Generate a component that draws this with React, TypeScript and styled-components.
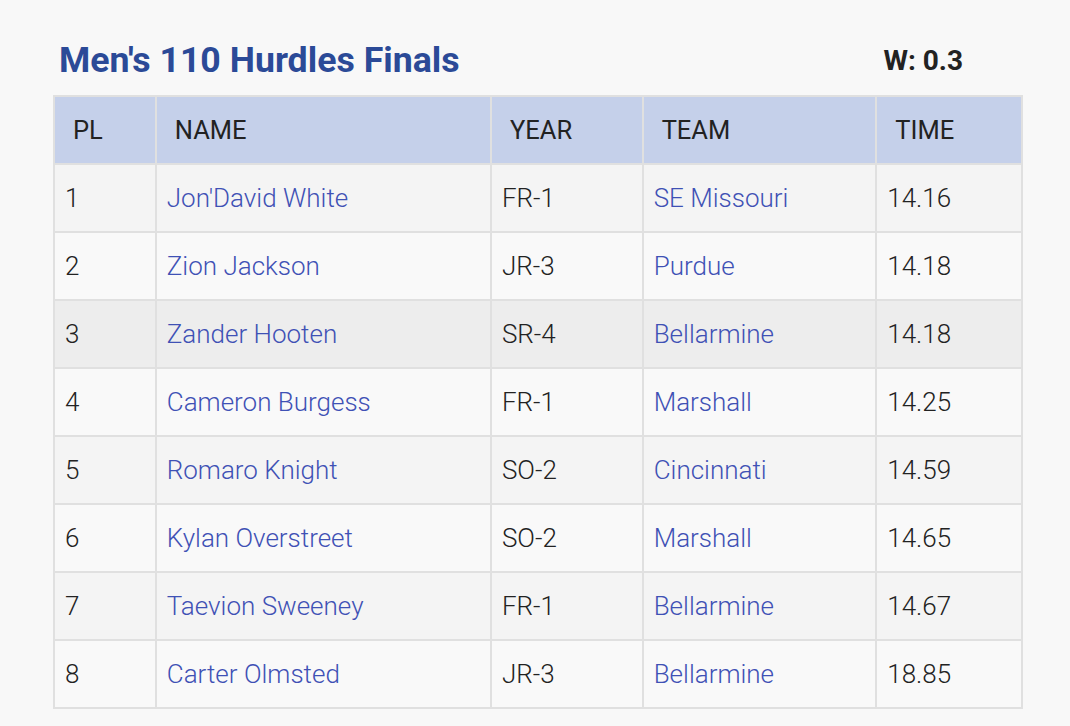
import React from 'react';
import styled, { createGlobalStyle } from 'styled-components';

const GlobalStyle = createGlobalStyle`
  html, body {
    margin: 0;
    padding: 0;
    background: #f8f8f8;
    font-family: Roboto, 'Liberation Sans', Arial, sans-serif;
  }
`;

const Page = styled.div`
  padding: 25px 47px 18px 53px;
  width: 970px;
`;

const TitleBar = styled.div`
  display: flex;
  justify-content: space-between;
  align-items: center;
  padding: 0 60px 0 6px;
  height: 70px;
`;

const Title = styled.h2`
  margin: 0;
  font-size: 35.7px;
  font-weight: 700;
  color: #2b4a97;
`;

const Wind = styled.div`
  font-size: 28px;
  font-weight: 700;
  color: #222;
`;

const Table = styled.table`
  width: 970px;
  border-collapse: collapse;
  border: 2px solid #e0e0e0;
  font-size: 26px;
  font-weight: 300;
  color: #222;
`;

const HeadCell = styled.th<{ $w: number }>`
  width: ${p => p.$w}px;
  height: 68px;
  padding: 0 0 0 18px;
  text-align: left;
  font-weight: 400;
  font-size: 25.5px;
  background: #c5d0ea;
  border: 2px solid #e0e0e0;
  box-sizing: border-box;
`;

const Row = styled.tr<{ $hover?: boolean }>`
  background: ${p => (p.$hover ? '#ededed' : '#f9f9f9')};
  &:nth-child(odd) {
    background: ${p => (p.$hover ? '#ededed' : '#f4f4f4')};
  }
`;

const Cell = styled.td`
  height: 68px;
  padding: 0 0 0 10px;
  border: 2px solid #e0e0e0;
  box-sizing: border-box;
`;

const Link = styled.a`
  color: #3f51b5;
  text-decoration: none;
`;

const columns = [
  { label: 'PL', w: 102 },
  { label: 'NAME', w: 336 },
  { label: 'YEAR', w: 152 },
  { label: 'TEAM', w: 234 },
  { label: 'TIME', w: 146 },
];

const results = [
  { pl: 1, name: "Jon'David White", year: 'FR-1', team: 'SE Missouri', time: '14.16' },
  { pl: 2, name: 'Zion Jackson', year: 'JR-3', team: 'Purdue', time: '14.18' },
  { pl: 3, name: 'Zander Hooten', year: 'SR-4', team: 'Bellarmine', time: '14.18' },
  { pl: 4, name: 'Cameron Burgess', year: 'FR-1', team: 'Marshall', time: '14.25' },
  { pl: 5, name: 'Romaro Knight', year: 'SO-2', team: 'Cincinnati', time: '14.59' },
  { pl: 6, name: 'Kylan Overstreet', year: 'SO-2', team: 'Marshall', time: '14.65' },
  { pl: 7, name: 'Taevion Sweeney', year: 'FR-1', team: 'Bellarmine', time: '14.67' },
  { pl: 8, name: 'Carter Olmsted', year: 'JR-3', team: 'Bellarmine', time: '18.85' },
];

export default function App() {
  return (
    <Page>
      <GlobalStyle />
      <TitleBar>
        <Title>Men's 110 Hurdles Finals</Title>
        <Wind>W: 0.3</Wind>
      </TitleBar>
      <Table>
        <thead>
          <tr>
            {columns.map(c => (
              <HeadCell key={c.label} $w={c.w}>{c.label}</HeadCell>
            ))}
          </tr>
        </thead>
        <tbody>
          {results.map(r => (
            <Row key={r.pl} $hover={r.pl === 3}>
              <Cell>{r.pl}</Cell>
              <Cell><Link href="#">{r.name}</Link></Cell>
              <Cell>{r.year}</Cell>
              <Cell><Link href="#">{r.team}</Link></Cell>
              <Cell>{r.time}</Cell>
            </Row>
          ))}
        </tbody>
      </Table>
    </Page>
  );
}
